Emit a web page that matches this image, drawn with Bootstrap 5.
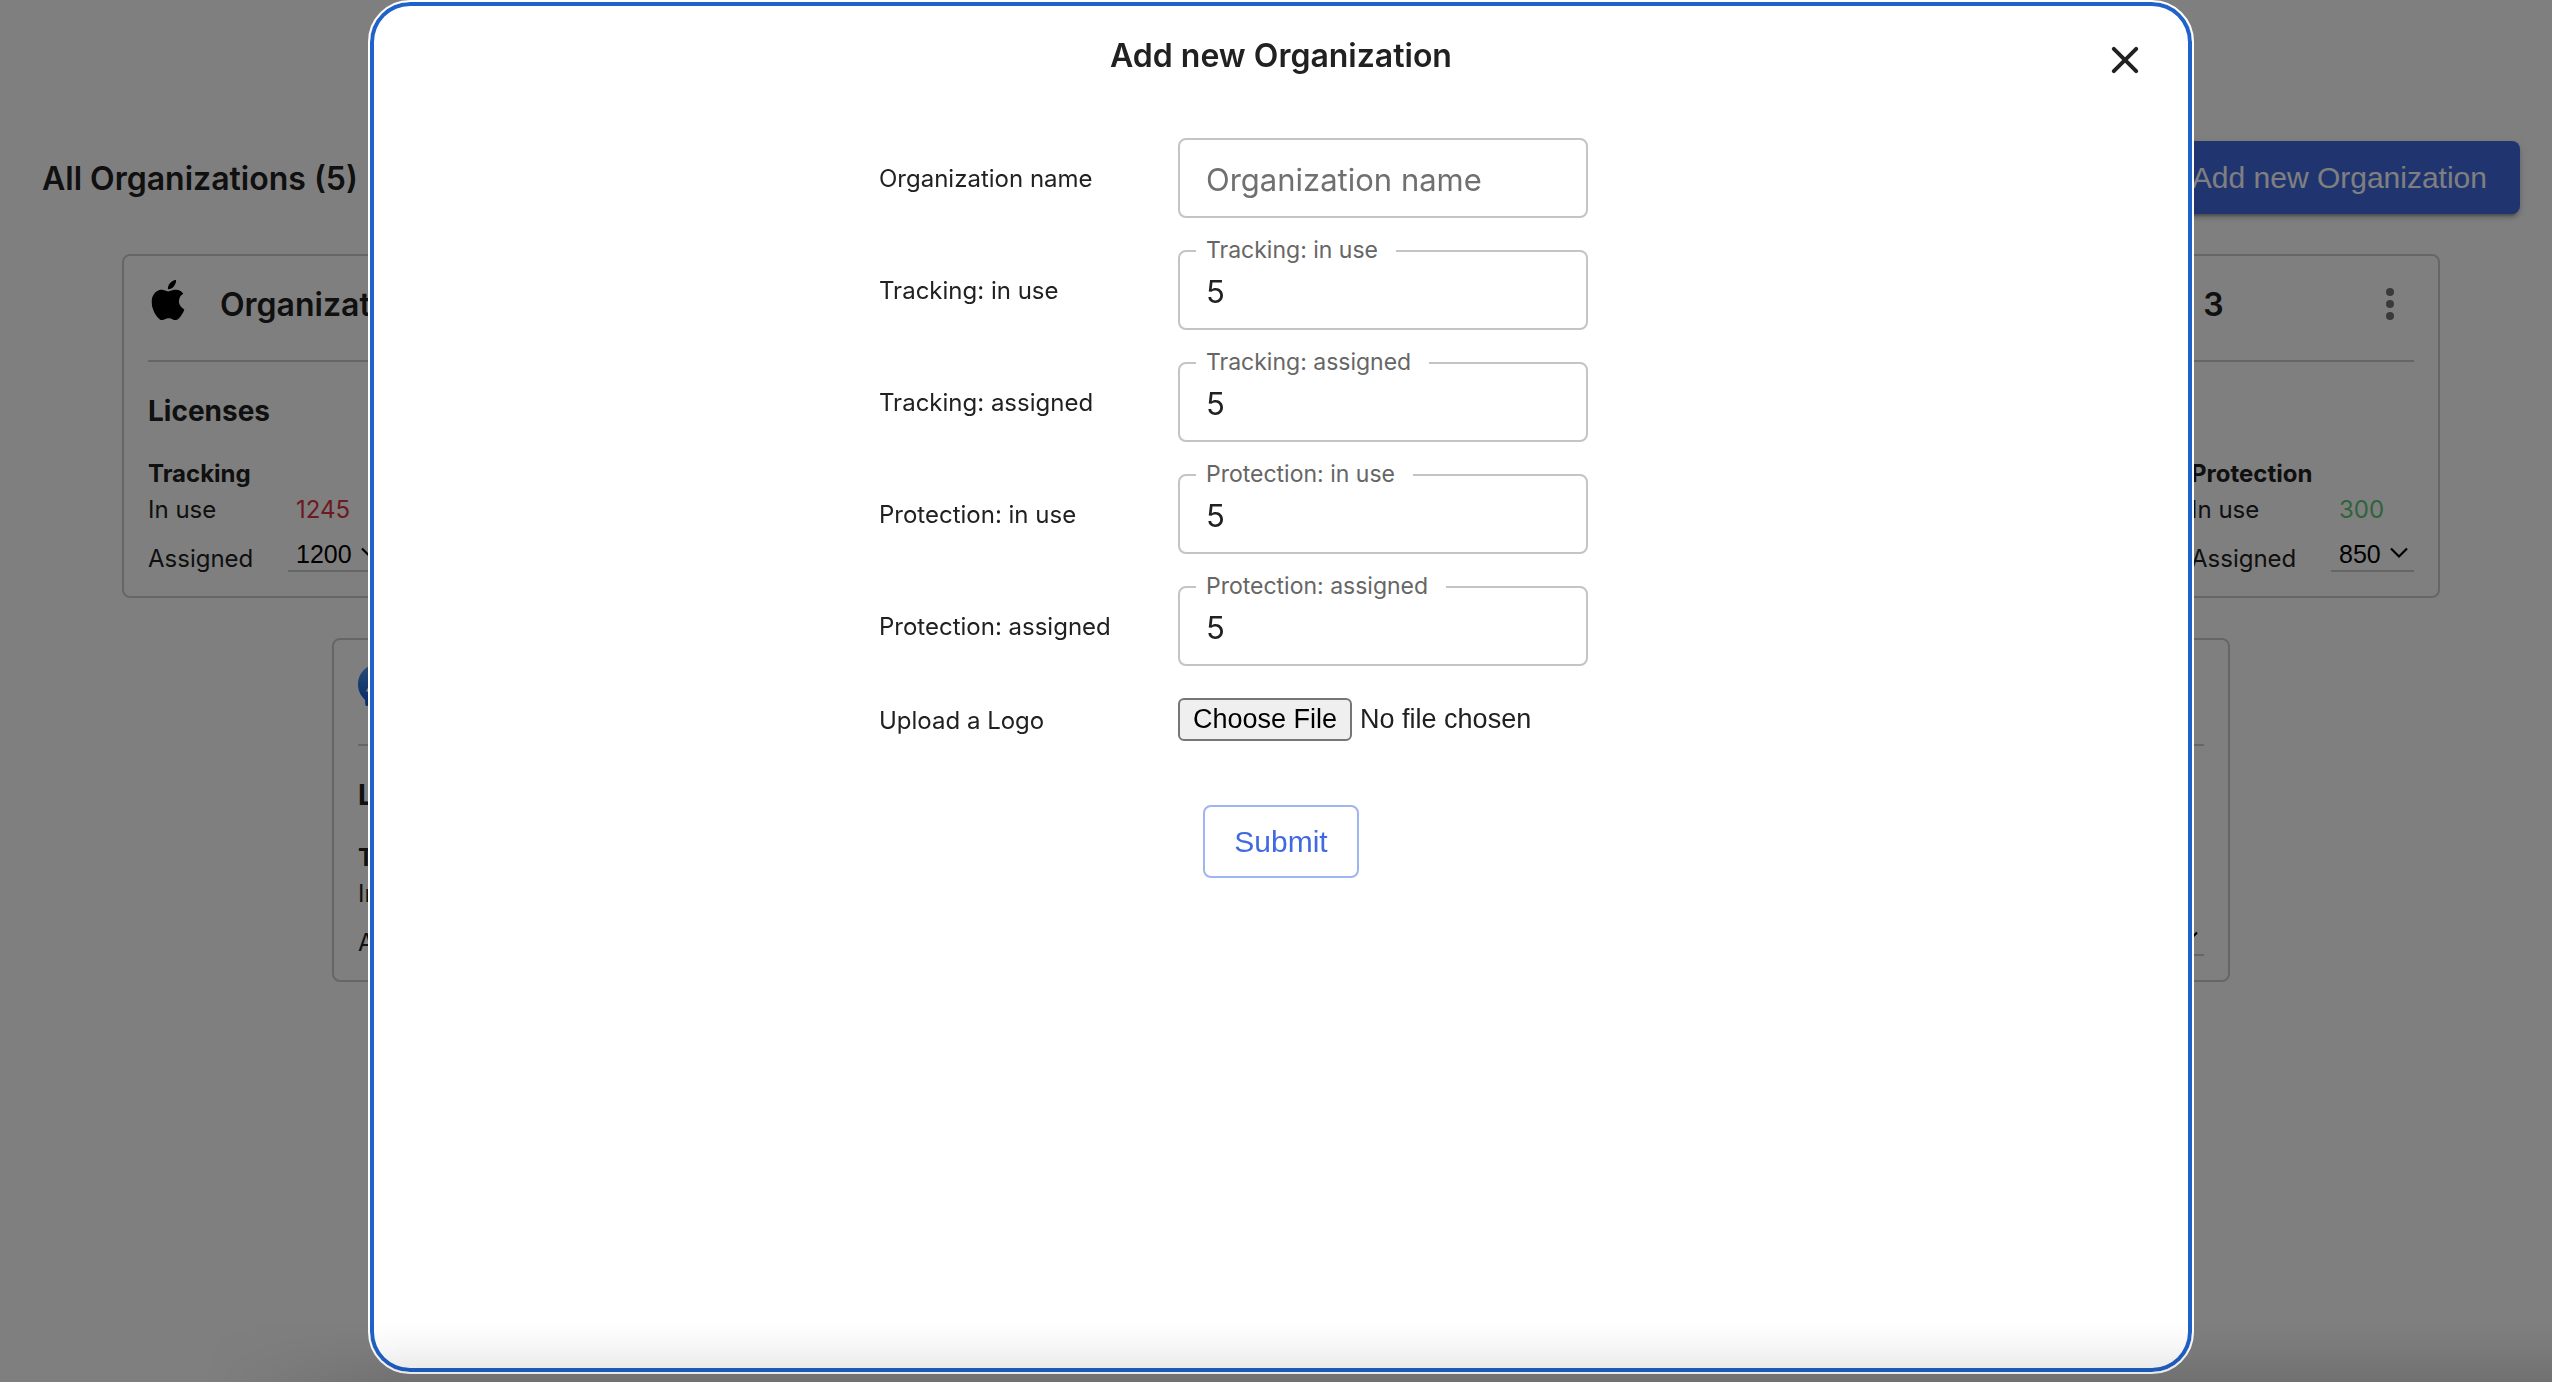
<!DOCTYPE html>
<html lang="en">
<head>
<meta charset="utf-8">
<meta name="viewport" content="width=device-width, initial-scale=1">
<title>Organizations</title>
<link href="https://cdn.jsdelivr.net/npm/bootstrap@5.3.0/dist/css/bootstrap.min.css" rel="stylesheet">
<style>
  body { font-family: Inter, "Liberation Sans", sans-serif; font-size: 24px; line-height: 36px; color: #212121; background: #fff; min-height: 100vh; overflow: hidden; }
  .page { padding: 141px 11px 0 21px; }
  .page-head { padding: 0 21px; }
  .page-title, .org-name, .dialog-title { font-size: 32px; line-height: 40px; font-weight: 600; margin: 0; }
  .page-title { padding-top: 2px; }
  .action { font-family: "Liberation Sans", sans-serif; font-size: 30px; line-height: 41px; border-radius: 8px; }
  .action-main { background: #4169e1; color: #fff; padding: 15px 32px; box-shadow: 0 6px 2px -4px rgba(0,0,0,.2), 0 4px 4px rgba(0,0,0,.14), 0 2px 10px rgba(0,0,0,.12); }
  .action-line { color: #4169e1; border: 2px solid #a0b4f0; padding: 14px 29px; }
  .org-list { margin-top: 40px; row-gap: 40px; }
  .org-card { width: 638px; height: 344px; border: 2px solid #ccc; border-radius: 8px; padding: 24px; }
  .org-head { height: 82px; border-bottom: 2px solid #ccc; }
  .org-head > svg { margin-right: 32px; }
  .org-name { margin-top: 5px; }
  .org-menu { padding: 0; border: 0; background: none; color: #757575; width: 48px; height: 48px; }
  .lic-title { font-size: 28px; line-height: 36px; font-weight: 700; margin: 31px 0 29px; }
  .lic-kind { font-weight: 700; line-height: 32px; padding-bottom: 2px; }
  .lic-line { line-height: 36px; }
  .lic-line > :first-child { width: 140px; }
  .lic-line > label { padding-top: 5px; }
  .lic-value { padding-left: 8px; }
  .over { color: #dc3545; }
  .under { color: #5fc77a; }
  .lic-select { appearance: none; border: 0; border-bottom: 2px solid #ccc; color: #000; font-family: "Liberation Sans", sans-serif; font-size: 25px; line-height: 28px; height: 36px; padding: 4px 33px 2px 8px; border-radius: 0;
    background: url("data:image/svg+xml,%3Csvg xmlns='http://www.w3.org/2000/svg' viewBox='0 0 18 12'%3E%3Cpath d='M1 1.5l8 8 8-8' fill='none' stroke='%23000' stroke-width='2.2'/%3E%3C/svg%3E") no-repeat right 6px center / 18px 12px; }

  .org-dialog { max-width: none; width: calc(70vw + 40px); height: calc(100vh - 8px); margin: 0; }
  .modal { padding-left: 10px; }
  .org-dialog .modal-content { height: 100%; border: 2px solid #fff; border-radius: 42px; box-shadow: inset 0 0 0 4px #1f62c9; }
  .dialog-head { padding: 34px 43px 0; height: 136px; display: grid; grid-template-columns: 48px 1fr 48px; align-items: start; }
  .dialog-close { grid-column: 3; padding: 0; border: 0; background: none; color: #212121; line-height: 0; }
  .org-form { width: 804px; margin: 0 auto; }
  .form-rows { gap: 32px; }
  .field-name { width: 299px; padding-top: 2px; }
  .field { width: 410px; position: relative; }
  .field .form-control { height: 80px; border: 2px solid #c4c4c4; border-radius: 8px; padding: 2px 26px 0; font-size: 31px; line-height: 40px; color: #212121; }
  .field .form-control::placeholder { color: #707070; }
  .field-notch { position: absolute; left: 18px; top: -16px; background: #fff; color: #666; padding: 0 18px 0 10px; font-size: 23px; line-height: 32px; }
  .file-pick { font-family: "Liberation Sans", sans-serif; font-size: 27px; line-height: 36px; width: 410px; }
  .file-pick::file-selector-button { font: inherit; line-height: 35px; padding: 2px 13px; border: 2px solid #767676; border-radius: 6px; background: #efefef; color: #000; margin-right: 8px; }
  .screen-fade { z-index: 1060; height: 60px; pointer-events: none; background: linear-gradient(transparent, rgba(0,0,0,.03) 40%, rgba(0,0,0,.11)); -webkit-mask-image: linear-gradient(to right, transparent 8%, #000 16%); mask-image: linear-gradient(to right, transparent 8%, #000 16%); }
</style>
</head>
<body>
<main class="page">
  <header class="page-head d-flex justify-content-between align-items-center">
    <h1 class="page-title">All Organizations (5)</h1>
    <button type="button" class="btn action action-main">Add new Organization</button>
  </header>
  <div class="org-list d-flex flex-wrap justify-content-around" id="orgs"></div>
</main>

<div class="modal-backdrop show"></div>
<div class="modal d-flex justify-content-center" role="dialog" aria-modal="true" aria-labelledby="dlgTitle">
  <div class="modal-dialog org-dialog">
    <div class="modal-content">
      <div class="dialog-head">
        <span></span>
        <h2 class="dialog-title text-center" id="dlgTitle">Add new Organization</h2>
        <button type="button" class="dialog-close" aria-label="Close">
          <svg width="48" height="48" viewBox="0 0 24 24" fill="currentColor"><path d="M18.3 5.71a.996.996 0 0 0-1.41 0L12 10.59 7.11 5.7A.996.996 0 1 0 5.7 7.11L10.59 12 5.7 16.89a.996.996 0 1 0 1.41 1.41L12 13.41l4.89 4.89a.996.996 0 1 0 1.41-1.41L13.41 12l4.89-4.89c.38-.38.38-1.02 0-1.4z"/></svg>
        </button>
      </div>
      <form class="org-form">
        <div class="form-rows d-flex flex-column">
          <div class="d-flex align-items-center">
            <label class="field-name" for="orgName">Organization name</label>
            <div class="field"><input class="form-control" id="orgName" type="text" placeholder="Organization name"></div>
          </div>
          <div class="d-flex align-items-center">
            <label class="field-name" for="trUse">Tracking: in use</label>
            <div class="field"><input class="form-control" id="trUse" type="text" inputmode="numeric" value="5"><label class="field-notch" for="trUse">Tracking: in use</label></div>
          </div>
          <div class="d-flex align-items-center">
            <label class="field-name" for="trAsg">Tracking: assigned</label>
            <div class="field"><input class="form-control" id="trAsg" type="text" inputmode="numeric" value="5"><label class="field-notch" for="trAsg">Tracking: assigned</label></div>
          </div>
          <div class="d-flex align-items-center">
            <label class="field-name" for="prUse">Protection: in use</label>
            <div class="field"><input class="form-control" id="prUse" type="text" inputmode="numeric" value="5"><label class="field-notch" for="prUse">Protection: in use</label></div>
          </div>
          <div class="d-flex align-items-center">
            <label class="field-name" for="prAsg">Protection: assigned</label>
            <div class="field"><input class="form-control" id="prAsg" type="text" inputmode="numeric" value="5"><label class="field-notch" for="prAsg">Protection: assigned</label></div>
          </div>
          <div class="d-flex align-items-center">
            <label class="field-name" for="logo">Upload a Logo</label>
            <input class="file-pick" id="logo" type="file">
          </div>
        </div>
        <div class="text-center mt-5 pt-3">
          <button type="submit" class="btn action action-line">Submit</button>
        </div>
      </form>
    </div>
  </div>
</div>
<div class="screen-fade fixed-bottom"></div>

<script src="https://cdn.jsdelivr.net/npm/bootstrap@5.3.0/dist/js/bootstrap.bundle.min.js"></script>
<script>
  const logos = {
    apple: '<svg width="40" height="40" viewBox="0 0 16 16" fill="#000"><path d="M11.182.008C11.148-.03 9.923.023 8.857 1.18c-1.066 1.156-.902 2.482-.878 2.516.024.034 1.52.087 2.475-1.258.955-1.345.762-2.391.728-2.43zm3.314 11.733c-.048-.096-2.325-1.234-2.113-3.422.212-2.189 1.675-2.789 1.698-2.854.023-.065-.597-.79-1.254-1.157a3.692 3.692 0 0 0-1.563-.434c-.108-.003-.483-.095-1.254.116-.508.139-1.653.589-1.968.607-.316.018-1.256-.522-2.267-.665-.647-.125-1.333.131-1.824.328-.49.196-1.422.754-2.074 2.237-.652 1.482-.311 3.83-.067 4.56.244.729.625 1.924 1.273 2.796.576.984 1.34 1.667 1.659 1.899.319.232 1.219.386 1.843.067.502-.308 1.408-.485 1.766-.472.357.013 1.061.154 1.782.539.571.197 1.111.115 1.652-.105.541-.221 1.324-1.059 2.238-2.758.347-.79.505-1.217.473-1.282z"/></svg>',
    wide: '<svg width="137" height="40" viewBox="0 0 137 40"><rect y="8" width="137" height="24" rx="12" fill="#444"/></svg>',
    chat: '<svg width="42" height="42" viewBox="0 0 16 16"><defs><linearGradient id="chatFill" x1="0" y1="0" x2="0" y2="1"><stop offset="0" stop-color="#4a9fe8"/><stop offset="1" stop-color="#1050d8"/></linearGradient></defs><path fill="url(#chatFill)" d="M0 7.76C0 3.301 3.493 0 8 0s8 3.301 8 7.76-3.493 7.76-8 7.76c-.81 0-1.586-.107-2.316-.307a.639.639 0 0 0-.427.03l-1.588.702a.64.64 0 0 1-.898-.566l-.044-1.423a.639.639 0 0 0-.215-.456C.956 12.108 0 10.092 0 7.76z"/><path fill="#fff" d="M5.546 6.301l-2.35 3.728c-.225.358.214.761.551.506l2.525-1.916a.48.48 0 0 1 .578-.002l1.869 1.402a1.2 1.2 0 0 0 1.735-.32l2.35-3.728c.226-.358-.214-.761-.551-.506L9.728 7.381a.48.48 0 0 1-.578.002L7.281 5.98a1.2 1.2 0 0 0-1.735.32z"/></svg>'
  };
  // The second card lies wholly behind the open dialog, so it only keeps its place.
  const orgs = [
    ['apple', 1245, 1200, 300, 850, ''], ['apple', 500, 900, 300, 850, 'invisible'], ['wide', 500, 900, 300, 850, ''],
    ['chat', 500, 900, 300, 850, ''], ['apple', 500, 900, 300, 850, '']
  ];
  const license = (kind, used, cap, id) => `
    <div>
      <div class="lic-kind">${kind}</div>
      <div class="lic-line d-flex"><span>In use</span><span class="lic-value ${used > cap ? 'over' : 'under'}">${used}</span></div>
      <div class="lic-line d-flex align-items-start mt-2"><label for="${id}">Assigned</label><select class="lic-select" id="${id}"><option>${cap}</option></select></div>
    </div>`;
  document.getElementById('orgs').innerHTML = orgs.map(([logo, tu, tc, pu, pc, state], i) => `
    <section class="org-card ${state}">
      <div class="org-head d-flex align-items-start">${logos[logo]}
        <h2 class="org-name flex-grow-1">Organization ${i + 1}</h2>
        <button type="button" class="org-menu" aria-label="Options"><svg width="48" height="48" viewBox="0 0 24 24" fill="currentColor"><circle cx="12" cy="6" r="2"/><circle cx="12" cy="12" r="2"/><circle cx="12" cy="18" r="2"/></svg></button>
      </div>
      <h3 class="lic-title">Licenses</h3>
      <div class="d-flex justify-content-between">${license('Tracking', tu, tc, 't' + i)}${license('Protection', pu, pc, 'p' + i)}</div>
    </section>`).join('');
</script>
</body>
</html>
